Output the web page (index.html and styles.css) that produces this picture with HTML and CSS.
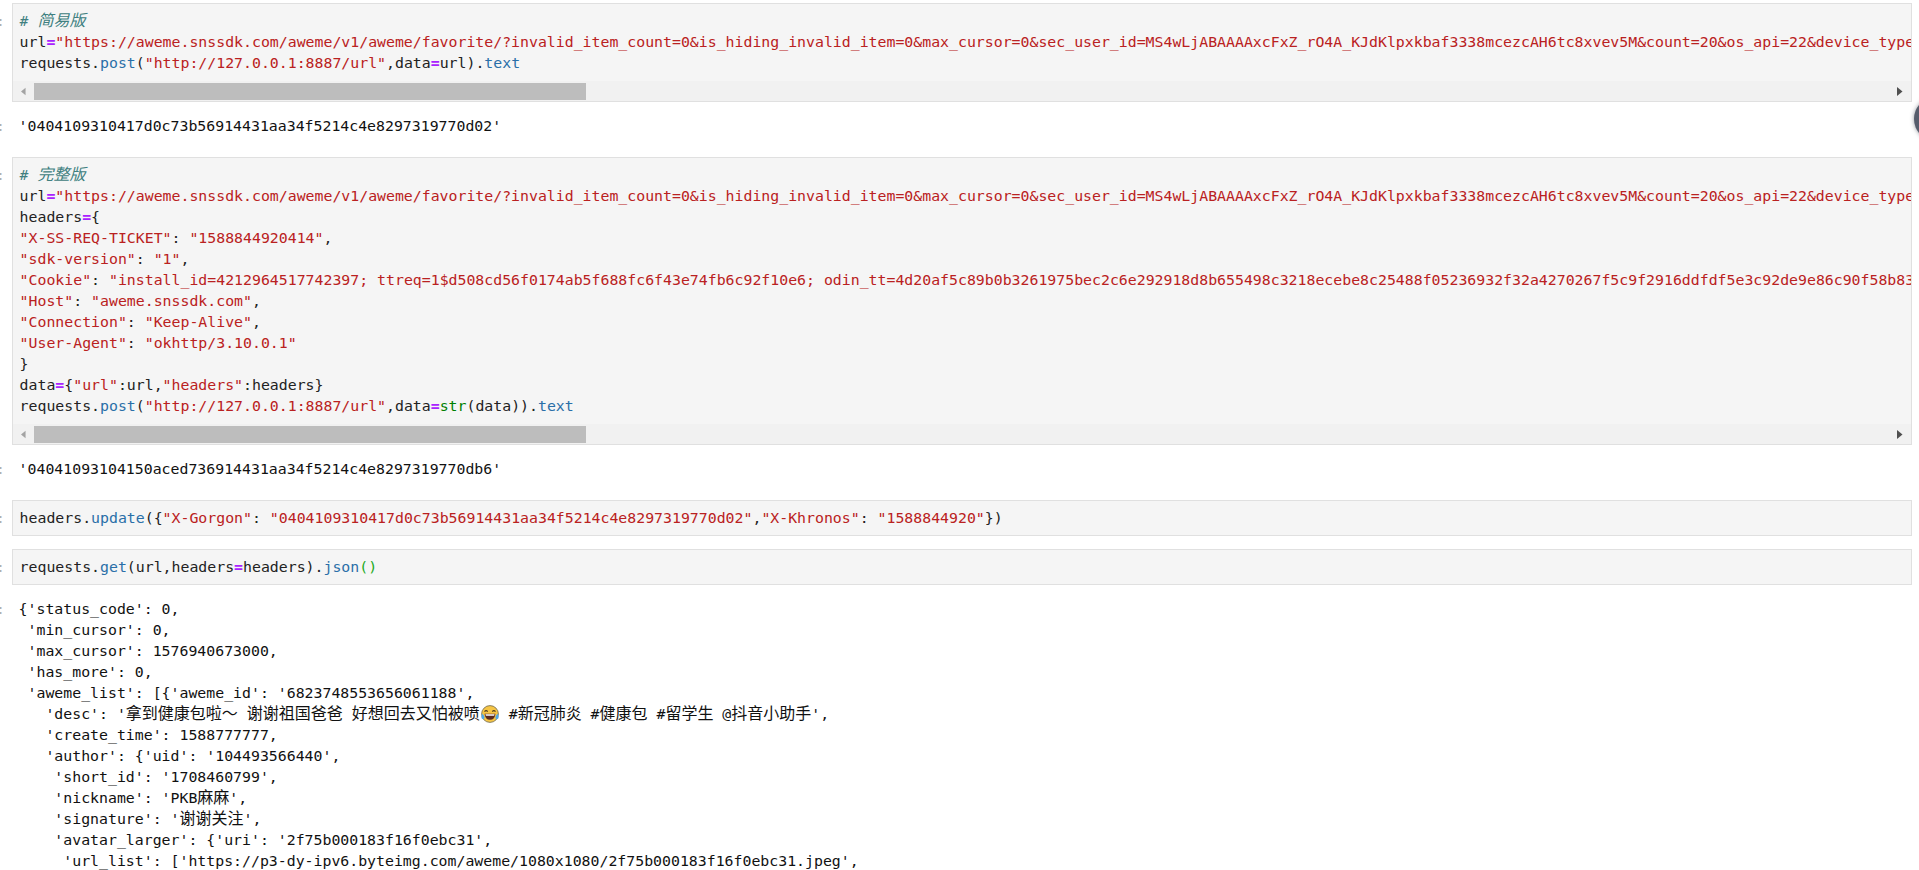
FILE: index.html
```html
<!DOCTYPE html>
<html lang="zh">
<head>
<meta charset="utf-8">
<title>Notebook</title>
<link rel="stylesheet" href="styles.css">
</head>
<body>
<main class="notebook">
  <section class="row">
    <div class="prompt">:</div>
    <div class="cell">
      <pre class="code code-scroll"><span class="cm"># <span class="cjk">简易版</span></span>
url<span class="op">=</span><span class="st">"https://aweme.snssdk.com/aweme/v1/aweme/favorite/?invalid_item_count=0&amp;is_hiding_invalid_item=0&amp;max_cursor=0&amp;sec_user_id=MS4wLjABAAAAxcFxZ_rO4A_KJdKlpxkbaf3338mcezcAH6tc8xvev5M&amp;count=20&amp;os_api=22&amp;device_type=SM-G9"</span>
requests.<span class="pr">post</span>(<span class="st">"http://127.0.0.1:8887/url"</span>,data<span class="op">=</span>url).<span class="pr">text</span></pre>
      <div class="hscroll">
        <svg class="arrow" width="6" height="9" viewBox="0 0 6 9"><path class="arrow-off" d="M5.5 0v9L0 4.5z"/></svg>
        <div class="thumb"></div>
        <svg class="arrow-end" width="6" height="9" viewBox="0 0 6 9"><path class="arrow-on" d="M0 0v9l5.5-4.5z"/></svg>
      </div>
    </div>
  </section>
  <section class="row output-row">
    <div class="prompt">:</div>
    <pre class="output">'0404109310417d0c73b56914431aa34f5214c4e8297319770d02'</pre>
  </section>

  <section class="row">
    <div class="prompt">:</div>
    <div class="cell">
      <pre class="code code-scroll"><span class="cm"># <span class="cjk">完整版</span></span>
url<span class="op">=</span><span class="st">"https://aweme.snssdk.com/aweme/v1/aweme/favorite/?invalid_item_count=0&amp;is_hiding_invalid_item=0&amp;max_cursor=0&amp;sec_user_id=MS4wLjABAAAAxcFxZ_rO4A_KJdKlpxkbaf3338mcezcAH6tc8xvev5M&amp;count=20&amp;os_api=22&amp;device_type=SM-G9"</span>
headers<span class="op">=</span>{
<span class="st">"X-SS-REQ-TICKET"</span>: <span class="st">"1588844920414"</span>,
<span class="st">"sdk-version"</span>: <span class="st">"1"</span>,
<span class="st">"Cookie"</span>: <span class="st">"install_id=4212964517742397; ttreq=1$d508cd56f0174ab5f688fc6f43e74fb6c92f10e6; odin_tt=4d20af5c89b0b3261975bec2c6e292918d8b655498c3218ecebe8c25488f05236932f32a4270267f5c9f2916ddfdf5e3c92de9e86c90f58b83933"</span>,
<span class="st">"Host"</span>: <span class="st">"aweme.snssdk.com"</span>,
<span class="st">"Connection"</span>: <span class="st">"Keep-Alive"</span>,
<span class="st">"User-Agent"</span>: <span class="st">"okhttp/3.10.0.1"</span>
}
data<span class="op">=</span>{<span class="st">"url"</span>:url,<span class="st">"headers"</span>:headers}
requests.<span class="pr">post</span>(<span class="st">"http://127.0.0.1:8887/url"</span>,data<span class="op">=</span><span class="bi">str</span>(data)).<span class="pr">text</span></pre>
      <div class="hscroll">
        <svg class="arrow" width="6" height="9" viewBox="0 0 6 9"><path class="arrow-off" d="M5.5 0v9L0 4.5z"/></svg>
        <div class="thumb"></div>
        <svg class="arrow-end" width="6" height="9" viewBox="0 0 6 9"><path class="arrow-on" d="M0 0v9l5.5-4.5z"/></svg>
      </div>
    </div>
  </section>
  <section class="row output-row">
    <div class="prompt">:</div>
    <pre class="output">'04041093104150aced736914431aa34f5214c4e8297319770db6'</pre>
  </section>

  <section class="row row-gap">
    <div class="prompt">:</div>
    <div class="cell">
      <pre class="code">headers.<span class="pr">update</span>({<span class="st">"X-Gorgon"</span>: <span class="st">"0404109310417d0c73b56914431aa34f5214c4e8297319770d02"</span>,<span class="st">"X-Khronos"</span>: <span class="st">"1588844920"</span>})</pre>
    </div>
  </section>

  <section class="row">
    <div class="prompt">:</div>
    <div class="cell">
      <pre class="code">requests.<span class="pr">get</span>(url,headers<span class="op">=</span>headers).<span class="pr">json</span><span class="match">()</span></pre>
    </div>
  </section>
  <section class="row output-row">
    <div class="prompt">:</div>
    <pre class="output">{'status_code': 0,
 'min_cursor': 0,
 'max_cursor': 1576940673000,
 'has_more': 0,
 'aweme_list': [{'aweme_id': '6823748553656061188',
   'desc': '<span class="cjk">拿到健康包啦～</span> <span class="cjk">谢谢祖国爸爸</span> <span class="cjk">好想回去又怕被喷</span><svg class="emoji" width="18" height="18" viewBox="0 0 18 18"><circle cx="9" cy="9" r="8.4" fill="#f6c544" stroke="#6f6a55" stroke-width=".8"/><path d="M3.5 6.6q1.6-1.8 3.2 0M11.3 6.6q1.6-1.8 3.2 0" fill="none" stroke="#4a3a20" stroke-width="1.2"/><path d="M3.6 8.8h10.8q-.4 6-5.4 6t-5.4-6z" fill="#5a2a1e"/><path d="M4.4 9.2h9.2l-.5 1.6H4.9z" fill="#fff"/><path d="M1 8.5q2.2 1.6 2.6 3.6 0 2.4-1.6 2.2-1.8-.4-1.6-2.6zM17 8.5q-2.2 1.6-2.6 3.6 0 2.4 1.6 2.2 1.8-.4 1.6-2.6z" fill="#4fa8e8"/></svg> #<span class="cjk">新冠肺炎</span> #<span class="cjk">健康包</span> #<span class="cjk">留学生</span> @<span class="cjk">抖音小助手</span>',
   'create_time': 1588777777,
   'author': {'uid': '104493566440',
    'short_id': '1708460799',
    'nickname': 'PKB<span class="cjk">麻麻</span>',
    'signature': '<span class="cjk">谢谢关注</span>',
    'avatar_larger': {'uri': '2f75b000183f16f0ebc31',
     'url_list': ['https://p3-dy-ipv6.byteimg.com/aweme/1080x1080/2f75b000183f16f0ebc31.jpeg',</pre>
  </section>
</main>
<div class="float-ball"></div>
</body>
</html>
```
FILE: styles.css
```css
html, body {
  margin: 0;
  height: 870px;
  overflow: hidden;
  background: #fff;
}

body {
  position: relative;
  font-family: "DejaVu Sans Mono", "Liberation Mono", monospace;
  font-size: 14.85px;
  line-height: 21px;
  color: #222;
}

.notebook {
  padding-top: 3px;
  padding-right: 7px;
}

.row {
  display: flex;
  align-items: flex-start;
}

.row-gap {
  margin-bottom: 13px;
}

.prompt {
  flex: 0 0 12px;
  width: 12px;
  height: 21px;
  margin-top: 8px;
  overflow: hidden;
  text-indent: -4px;
  color: #b0b0b0;
}

.cell {
  flex: 1;
  min-width: 0;
  border: 1px solid #e0e0e0;
  background: #f5f5f5;
}

.code {
  margin: 0;
  padding: 7px 0 6px 6.6px;
  overflow: hidden;
  font: inherit;
  white-space: pre;
  color: #222;
}

.code-scroll {
  padding-bottom: 7px;
}

.output-row {
  padding: 14px 0 20px;
}

.output-row .prompt {
  margin-top: 0;
}

.output {
  margin: 0 0 0 6.6px;
  font: inherit;
  white-space: pre;
  color: #111;
}

.cjk {
  font-family: "Noto Sans CJK SC", sans-serif;
  font-size: 16px;
  line-height: 0;
  font-weight: 400;
}

.cm {
  font-style: italic;
  color: #408080;
}

.st {
  color: #ba2121;
}

.op {
  font-weight: 700;
  color: #aa22ff;
}

.pr {
  color: #2a6fa8;
}

.bi {
  color: #008000;
}

.match {
  color: #22aa22;
}

.hscroll {
  display: flex;
  align-items: center;
  height: 20px;
  background: #f1f1f1;
}

.arrow {
  flex: none;
  margin: 0 8px 0 8px;
  width: 5px;
}

.arrow-end {
  flex: none;
  margin-left: auto;
  margin-right: 8px;
}

.arrow-off {
  fill: #a3a3a3;
}

.arrow-on {
  fill: #505050;
}

.thumb {
  flex: none;
  width: 552px;
  height: 17px;
  margin-top: 1px;
  background: #bdbdbd;
}

.emoji {
  margin-left: 1px;
  margin-right: 1px;
  vertical-align: -4px;
}

.float-ball {
  position: absolute;
  left: 1914px;
  top: 97px;
  width: 44px;
  height: 44px;
  border-radius: 50%;
  background: #565d6c;
  box-shadow: 0 0 4px rgba(60, 66, 80, .55);
}
```
